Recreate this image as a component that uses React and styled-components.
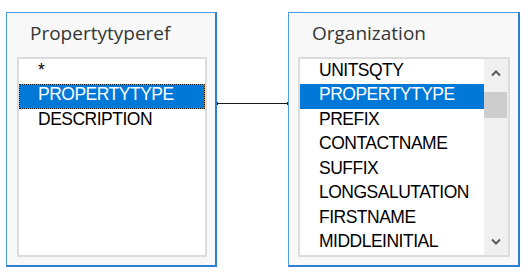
import React from 'react';
import styled, { createGlobalStyle } from 'styled-components';

const GlobalStyle = createGlobalStyle`
  html, body {
    margin: 0;
    padding: 0;
    background: #ffffff;
  }
`;

const Canvas = styled.div`
  display: flex;
  align-items: flex-start;
  padding: 12px 0 0 6px;
`;

const TableBox = styled.div`
  box-sizing: border-box;
  width: ${(p) => p.$width}px;
  height: 255px;
  background: #f8f8f8;
  border-top: 1px solid #4f9be3;
  border-left: 1px solid #4f9be3;
  border-right: 2px solid #2d7fd3;
  border-bottom: 2px solid #2d7fd3;
  display: flex;
  flex-direction: column;
`;

const Title = styled.div`
  box-sizing: border-box;
  height: 44px;
  padding: 7px 0 0 23px;
  font-family: 'Open Sans', 'Noto Sans', sans-serif;
  font-size: 19px;
  line-height: 26px;
  color: #363636;
`;

const ListFrame = styled.div`
  box-sizing: border-box;
  margin-left: ${(p) => p.$left}px;
  width: ${(p) => p.$width}px;
  height: 200px;
  background: #ffffff;
  border: 2px solid #dcdcdc;
  display: flex;
  overflow: hidden;
`;

const Items = styled.div`
  flex: 1;
  display: flex;
  flex-direction: column;
  padding-top: 0.5px;
`;

const Item = styled.div`
  box-sizing: border-box;
  height: 24.5px;
  flex: none;
  padding-left: ${(p) => (p.$focused ? 18 : 19)}px;
  font-family: 'Liberation Sans', Arial, sans-serif;
  font-size: 17.5px;
  letter-spacing: -0.5px;
  line-height: ${(p) => (p.$focused ? 18 : 20)}px;
  color: ${(p) => (p.$selected ? '#ffffff' : '#000000')};
  background: ${(p) => (p.$selected ? '#0078d7' : 'transparent')};
  white-space: nowrap;
  ${(p) =>
    p.$focused &&
    `
    border: 1px dotted #1a1a1a;
    background: linear-gradient(#0078d7, #0078d7) padding-box,
      linear-gradient(#e08a2c, #e08a2c) border-box;
  `}
`;

const ScrollBar = styled.div`
  width: 24px;
  flex: none;
  background: #f0f0f0;
  display: flex;
  flex-direction: column;
`;

const ArrowButton = styled.div`
  height: 28px;
  flex: none;
  display: flex;
  align-items: center;
  justify-content: center;
`;

const Track = styled.div`
  flex: 1;
  padding-top: 5px;
`;

const Thumb = styled.div`
  height: 26px;
  margin: 0 1px 0 0;
  background: #cdcdcd;
`;

const Connector = styled.div`
  position: relative;
  width: 71px;
  height: 1px;
  margin-top: 91px;
  background: #1c1c1c;

  &::before,
  &::after {
    content: '';
    position: absolute;
    top: -1px;
    width: 1px;
    height: 3px;
    background: #1c1c1c;
  }
  &::before {
    left: 0;
  }
  &::after {
    right: 0;
  }
`;

const Chevron = ({ down }) => (
  <svg width="10" height="7" viewBox="0 0 10 7">
    <polyline
      points={down ? '1,1.5 5,5.5 9,1.5' : '1,5.5 5,1.5 9,5.5'}
      fill="none"
      stroke="#5a5a5a"
      strokeWidth="2"
    />
  </svg>
);

const leftFields = ['*', 'PROPERTYTYPE', 'DESCRIPTION'];
const rightFields = [
  'UNITSQTY',
  'PROPERTYTYPE',
  'PREFIX',
  'CONTACTNAME',
  'SUFFIX',
  'LONGSALUTATION',
  'FIRSTNAME',
  'MIDDLEINITIAL',
];

export default function App() {
  return (
    <>
      <GlobalStyle />
      <Canvas>
        <TableBox $width={211}>
          <Title>Propertytyperef</Title>
          <ListFrame $left={10} $width={190}>
            <Items>
              {leftFields.map((f) => (
                <Item
                  key={f}
                  $selected={f === 'PROPERTYTYPE'}
                  $focused={f === 'PROPERTYTYPE'}
                >
                  {f}
                </Item>
              ))}
            </Items>
          </ListFrame>
        </TableBox>
        <Connector />
        <TableBox $width={232}>
          <Title>Organization</Title>
          <ListFrame $left={9} $width={212}>
            <Items>
              {rightFields.map((f) => (
                <Item key={f} $selected={f === 'PROPERTYTYPE'}>
                  {f}
                </Item>
              ))}
            </Items>
            <ScrollBar>
              <ArrowButton>
                <Chevron />
              </ArrowButton>
              <Track>
                <Thumb />
              </Track>
              <ArrowButton>
                <Chevron down />
              </ArrowButton>
            </ScrollBar>
          </ListFrame>
        </TableBox>
      </Canvas>
    </>
  );
}
